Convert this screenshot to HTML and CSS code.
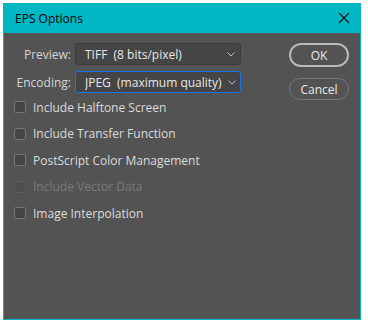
FILE: index.html
```html
<!DOCTYPE html>
<html lang="en">
<head>
    <meta charset="UTF-8">
    <title>EPS Options</title>
    <link rel="stylesheet" href="styles.css">
</head>
<body>
    <div class="window">
        <div class="titlebar">
            <span class="title">EPS Options</span>
            <svg class="close" width="12" height="12" viewBox="0 0 12 12">
                <path d="M1 1 L11 11 M11 1 L1 11" stroke="#111" stroke-width="1.1" fill="none"/>
            </svg>
        </div>
        <div class="content">
            <div class="options">
                <div class="fields">
                    <div class="field">
                        <label class="field-label">Preview:</label>
                        <div class="select">
                            <span>TIFF&nbsp;&nbsp;(8 bits/pixel)</span>
                            <svg class="chevron" width="8" height="5" viewBox="0 0 8 5"><path d="M0.5 0.5 L4 4 L7.5 0.5" stroke="#bdbdbd" fill="none"/></svg>
                        </div>
                    </div>
                    <div class="field">
                        <label class="field-label">Encoding:</label>
                        <div class="select focused">
                            <span>JPEG&nbsp;&nbsp;(maximum quality)</span>
                            <svg class="chevron" width="8" height="5" viewBox="0 0 8 5"><path d="M0.5 0.5 L4 4 L7.5 0.5" stroke="#bdbdbd" fill="none"/></svg>
                        </div>
                    </div>
                </div>
                <div class="checks">
                    <div class="check"><span class="box"></span>Include Halftone Screen</div>
                    <div class="check"><span class="box"></span>Include Transfer Function</div>
                    <div class="check"><span class="box"></span>PostScript Color Management</div>
                    <div class="check disabled"><span class="box"></span>Include Vector Data</div>
                    <div class="check"><span class="box"></span>Image Interpolation</div>
                </div>
            </div>
            <div class="buttons">
                <button class="btn primary">OK</button>
                <button class="btn">Cancel</button>
            </div>
        </div>
    </div>
</body>
</html>
```

FILE: styles.css
```css
* {
    box-sizing: border-box;
    font-family: 'Open Sans', 'Noto Sans', sans-serif;
}

body {
    margin: 0;
    padding: 3px;
    background: #ffffff;
}

.window {
    width: 358px;
    height: 317px;
    border: 1px solid #00b7c3;
    border-top: none;
    background: #535353;
    display: flex;
    flex-direction: column;
}

.titlebar {
    height: 30px;
    margin: 0 -1px;
    background: #00b7c3;
    display: flex;
    align-items: center;
    justify-content: space-between;
    padding: 0 11px 0 12px;
}

.title {
    font-size: 12px;
    color: #000;
}

.content {
    display: flex;
    justify-content: space-between;
    padding: 10px 11px 0 5px;
}

.fields {
    display: flex;
    flex-direction: column;
    gap: 6px;
}

.field {
    display: flex;
    align-items: center;
    height: 22px;
}

.field-label {
    width: 62px;
    text-align: right;
    margin-right: 4px;
    font-size: 12px;
    color: #d6d6d6;
}

.select {
    width: 166px;
    height: 22px;
    background: #454545;
    border: 1px solid #3b3b3b;
    border-radius: 3px;
    display: flex;
    align-items: center;
    justify-content: space-between;
    padding: 0 5px 0 9px;
    font-size: 12px;
    color: #e8e8e8;
}

.select span {
    white-space: nowrap;
    overflow: hidden;
}

.select .chevron {
    flex-shrink: 0;
}

.select.focused {
    border-color: #1473e6;
    padding-right: 4px;
}

.checks {
    margin-top: 1px;
}

.check {
    display: flex;
    align-items: center;
    height: 26.5px;
    font-size: 12px;
    color: #dcdcdc;
}

.check .box {
    width: 12px;
    height: 12px;
    margin: 0 7px 0 5px;
    border: 1px solid #767676;
    border-radius: 2px;
    background: #454545;
}

.check.disabled {
    color: #7a7a7a;
}

.check.disabled .box {
    border-color: #5c5c5c;
    background: #4e4e4e;
}

.buttons {
    display: flex;
    flex-direction: column;
    gap: 11px;
}

.btn {
    width: 60px;
    height: 24px;
    border-radius: 12px;
    background: transparent;
    border: 2px solid #b8b8b8;
    color: #e8e8e8;
    font-size: 12px;
    padding: 0;
}

.btn + .btn {
    height: 22px;
    border: 1px solid #767676;
}
```
